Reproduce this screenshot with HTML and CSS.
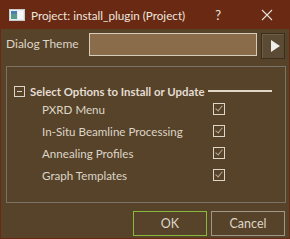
FILE: index.html
```html
<!DOCTYPE html>
<html lang="en">

<head>
    <meta charset="UTF-8">
    <title>install_plugin</title>
    <link rel="stylesheet" href="styles.css">
</head>

<body>
    <div class="window">

        <!-- Title bar -->
        <div class="titlebar">
            <svg class="appicon" width="16" height="12" viewBox="0 0 16 12">
                <rect x="0.5" y="0.5" width="15" height="11" fill="#e8ecee" stroke="#c8cdd0"/>
                <rect x="2" y="2" width="6" height="8" fill="#5a9a8a"/>
                <rect x="2" y="2" width="6" height="3" fill="#4a7fb0"/>
                <rect x="9" y="2" width="5" height="8" fill="#f4f6f7"/>
            </svg>
            <span class="title">Project: install_plugin (Project)</span>
            <span class="help">?</span>
            <svg class="close" width="12" height="12" viewBox="0 0 12 12">
                <path d="M1 1 L11 11 M11 1 L1 11" stroke="#e6e0da" stroke-width="1.1"/>
            </svg>
        </div>

        <div class="content">
            <!-- Theme row -->
            <div class="themeRow">
                <label>Dialog Theme</label>
                <div class="themeBox"></div>
                <button class="arrowBtn">
                    <svg width="10" height="12" viewBox="0 0 10 12">
                        <path d="M1 0 L10 6 L1 12 Z" fill="#f0eeea"/>
                    </svg>
                </button>
            </div>

            <!-- Options group -->
            <div class="group">
                <div class="groupHead">
                    <span class="collapse"></span>
                    <span class="groupTitle">Select Options to Install or Update</span>
                    <span class="groupLine"></span>
                </div>
                <ul class="options">
                    <li><span>PXRD Menu</span><span class="check"></span></li>
                    <li><span>In-Situ Beamline Processing</span><span class="check"></span></li>
                    <li><span>Annealing Profiles</span><span class="check"></span></li>
                    <li><span>Graph Templates</span><span class="check"></span></li>
                </ul>
            </div>

            <!-- Buttons -->
            <div class="footer">
                <button class="ok">OK</button>
                <button class="cancel">Cancel</button>
            </div>
        </div>
    </div>
</body>

</html>
```

FILE: styles.css
```css
html,
body {
    margin: 0;
    padding: 0;
    background: #6a2913;
}

body {
    font-family: Lato, "Noto Sans", sans-serif;
    font-size: 11.6px;
    color: #ddd5c8;
    white-space: nowrap;
}

.window {
    width: 290px;
    height: 239px;
    box-sizing: border-box;
    border: 1px solid #6a2913;
    border-top: none;
    display: flex;
    flex-direction: column;
}

.titlebar {
    height: 29px;
    flex: none;
    background: #6a2913;
    display: flex;
    align-items: center;
    padding-left: 8px;
    color: #ece6df;
    font-size: 11.7px;
}

.appicon {
    margin-right: 6px;
}

.title {
    flex: 1;
}

.help {
    margin-right: 40px;
    font-size: 13px;
}

.close {
    margin-right: 16px;
}

.content {
    flex: 1;
    background: #574329;
    display: flex;
    flex-direction: column;
    padding: 4px 4px 0 4px;
}

.themeRow {
    display: flex;
    align-items: flex-start;
    height: 29px;
}

.themeRow label {
    width: 83px;
    padding-left: 1px;
    margin-top: 3px;
    font-size: 12px;
}

.themeBox {
    width: 166px;
    height: 21px;
    background: #8a6c4a;
    border: 1px solid #d6ccbd;
}

.arrowBtn {
    margin-left: 4px;
    width: 24px;
    height: 26px;
    padding: 0;
    padding-left: 3px;
    background: #5b4a34;
    border: 1px solid #3a2e20;
    box-shadow: inset 1px 1px 0 #6e5c44;
    display: flex;
    align-items: center;
    justify-content: center;
}

.group {
    margin-top: 4px;
    margin-left: 1px;
    width: 280px;
    height: 137px;
    box-sizing: border-box;
    border: 1px solid #7b7266;
}

.groupHead {
    display: flex;
    align-items: center;
    margin-top: 18px;
    padding-left: 7px;
}

.collapse {
    width: 9px;
    height: 9px;
    border: 1px solid #ddd5c8;
    position: relative;
    margin-right: 5px;
}

.collapse::after {
    content: "";
    position: absolute;
    left: 2px;
    right: 2px;
    top: 4px;
    height: 1px;
    background: #ddd5c8;
}

.groupTitle {
    font-weight: bold;
    font-size: 11.4px;
    color: #e4ddd2;
}

.groupLine {
    width: 64px;
    height: 2px;
    background: #e2d6c6;
    margin-left: 4px;
    margin-top: -2px;
}

.options {
    list-style-type: none;
    margin: 0;
    padding: 0 0 0 35px;
}

.options li {
    display: flex;
    align-items: center;
    justify-content: space-between;
    width: 183px;
    height: 22px;
}

.check {
    width: 10px;
    height: 10px;
    border: 1px solid #ddd5c8;
    position: relative;
}

.check::after {
    content: "";
    position: absolute;
    left: 3px;
    top: 0px;
    width: 3px;
    height: 6px;
    border: solid #b5aa9a;
    border-width: 0 1px 1px 0;
    transform: rotate(40deg);
}

.footer {
    display: flex;
    justify-content: flex-end;
    gap: 4px;
    margin-top: 8px;
    padding-right: 0;
}

.footer button {
    width: 74px;
    height: 25px;
    background: #574329;
    color: #ddd5c8;
    font-family: Lato, "Noto Sans", sans-serif;
    font-size: 12.5px;
    cursor: pointer;
}

.ok {
    border: 1px solid #8ab83c;
}

.cancel {
    border: 1px solid #9d978c;
}
```
